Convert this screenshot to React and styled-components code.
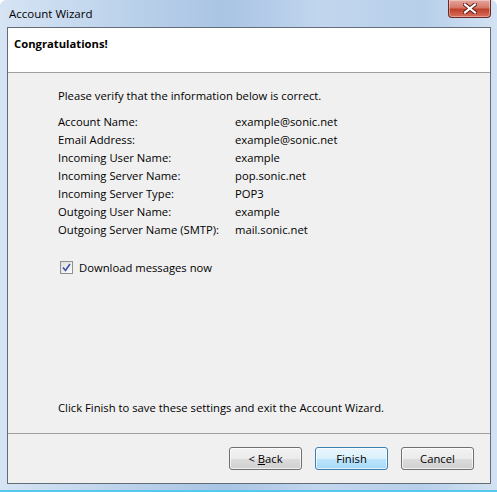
import React from 'react'
import styled, { createGlobalStyle } from 'styled-components'

const GlobalStyle = createGlobalStyle`
html, body {
    margin: 0;
    padding: 0;
    background: #fff;
}
body {
    font-family: "Open Sans", "Noto Sans", "Liberation Sans", sans-serif;
    font-size: 11.25px;
    color: #000;
}
`

const Window = styled.div`
width: 497px;
height: 492px;
box-sizing: border-box;
display: flex;
flex-direction: column;
background: linear-gradient(to right, #d6e4f4 0%, #bcd2eb 25%, #a9c4e4 45%, #c2d6ee 65%, #b7cfea 85%, #d3e2f3 100%);
border-bottom: 2px solid #56c8ef;
border-radius: 6px 6px 0 0;
overflow: hidden;
`
const TitleBar = styled.div`
height: 27px;
display: flex;
justify-content: space-between;
align-items: flex-start;
padding-left: 9px;
padding-right: 6px;
box-sizing: border-box;
`
const TitleText = styled.div`
line-height: 27px;
font-size: 11.5px;
color: #000;
`
const CloseButton = styled.div`
width: 43px;
height: 18px;
box-sizing: border-box;
border: 1px solid #6b2a24;
border-top: none;
border-radius: 0 0 4px 4px;
background: linear-gradient(to bottom, #e6a59c 0%, #d47868 45%, #c0402c 55%, #d8705c 100%);
display: flex;
align-items: center;
justify-content: center;
box-shadow: inset 0 0 0 1px rgba(255, 255, 255, 0.35);
`
const Client = styled.div`
flex: 1;
margin: 0 6px 6px 7px;
border: 1px solid #646c76;
background: #f0f0f0;
display: flex;
flex-direction: column;
`
const Header = styled.div`
height: 45px;
background: #fff;
border-bottom: 1px solid #a0a0a0;
padding: 8px 6px 0;
box-sizing: border-box;
font-weight: bold;
line-height: 16px;
`
const Body = styled.div`
flex: 1;
display: flex;
flex-direction: column;
padding: 14px 0 17px 50px;
border-bottom: 1px solid #a0a0a0;
`
const Intro = styled.div`
line-height: 18px;
margin-bottom: 8px;
`
const InfoGrid = styled.div`
display: grid;
grid-template-columns: 177px 1fr;
line-height: 18px;
`
const CheckRow = styled.label`
display: flex;
align-items: center;
gap: 6px;
height: 18px;
margin-top: 19px;
padding-left: 2px;
`
const CheckBox = styled.span`
width: 13px;
height: 13px;
box-sizing: border-box;
border: 1px solid #8e8f8f;
background: linear-gradient(135deg, #dcdcdc, #fdfdfd);
display: flex;
align-items: center;
justify-content: center;
`
const Spacer = styled.div`
flex: 1;
`
const FinishNote = styled.div`
line-height: 16px;
`
const Footer = styled.div`
height: 49px;
display: flex;
justify-content: flex-end;
align-items: flex-start;
gap: 13px;
padding: 13px 16px 0 0;
box-sizing: border-box;
`
const Button = styled.button`
width: 73px;
height: 23px;
box-sizing: border-box;
font: inherit;
color: #000;
padding: 0;
border-radius: 3px;
border: 1px solid ${props => (props.primary ? '#3c7fb1' : '#707070')};
background: ${props => (props.primary
        ? 'linear-gradient(to bottom, #eaf6fd 0%, #d9f0fc 50%, #bee6fd 50%, #a7d9f5 100%)'
        : 'linear-gradient(to bottom, #f2f2f2 0%, #ebebeb 50%, #dddddd 50%, #cfcfcf 100%)')};
box-shadow: inset 0 0 0 1px rgba(255, 255, 255, 0.7);
`

const rows = [
    ['Account Name:', 'example@sonic.net'],
    ['Email Address:', 'example@sonic.net'],
    ['Incoming User Name:', 'example'],
    ['Incoming Server Name:', 'pop.sonic.net'],
    ['Incoming Server Type:', 'POP3'],
    ['Outgoing User Name:', 'example'],
    ['Outgoing Server Name (SMTP):', 'mail.sonic.net'],
]

const App = () => {
    return (
        <>
            <GlobalStyle />
            <Window>
                <TitleBar>
                    <TitleText>Account Wizard</TitleText>
                    <CloseButton>
                        <svg width="14" height="11" viewBox="0 0 14 11">
                            <path d="M2 1.5 L12 9.5 M12 1.5 L2 9.5" stroke="#5a1a14" strokeWidth="4" strokeLinecap="square" />
                            <path d="M2 1.5 L12 9.5 M12 1.5 L2 9.5" stroke="#fff" strokeWidth="2.2" strokeLinecap="square" />
                        </svg>
                    </CloseButton>
                </TitleBar>
                <Client>
                    <Header>Congratulations!</Header>
                    <Body>
                        <Intro>Please verify that the information below is correct.</Intro>
                        <InfoGrid>
                            {rows.map(([label, value]) => (
                                <React.Fragment key={label}>
                                    <div>{label}</div>
                                    <div>{value}</div>
                                </React.Fragment>
                            ))}
                        </InfoGrid>
                        <CheckRow>
                            <CheckBox>
                                <svg width="9" height="9" viewBox="0 0 9 9">
                                    <path d="M1 4.5 L3.5 7.5 L8 1" fill="none" stroke="#3a4fa8" strokeWidth="1.6" />
                                </svg>
                            </CheckBox>
                            Download messages now
                        </CheckRow>
                        <Spacer />
                        <FinishNote>Click Finish to save these settings and exit the Account Wizard.</FinishNote>
                    </Body>
                    <Footer>
                        <Button>&lt; <u>B</u>ack</Button>
                        <Button primary>Finish</Button>
                        <Button>Cancel</Button>
                    </Footer>
                </Client>
            </Window>
        </>
    )
}

export default App
